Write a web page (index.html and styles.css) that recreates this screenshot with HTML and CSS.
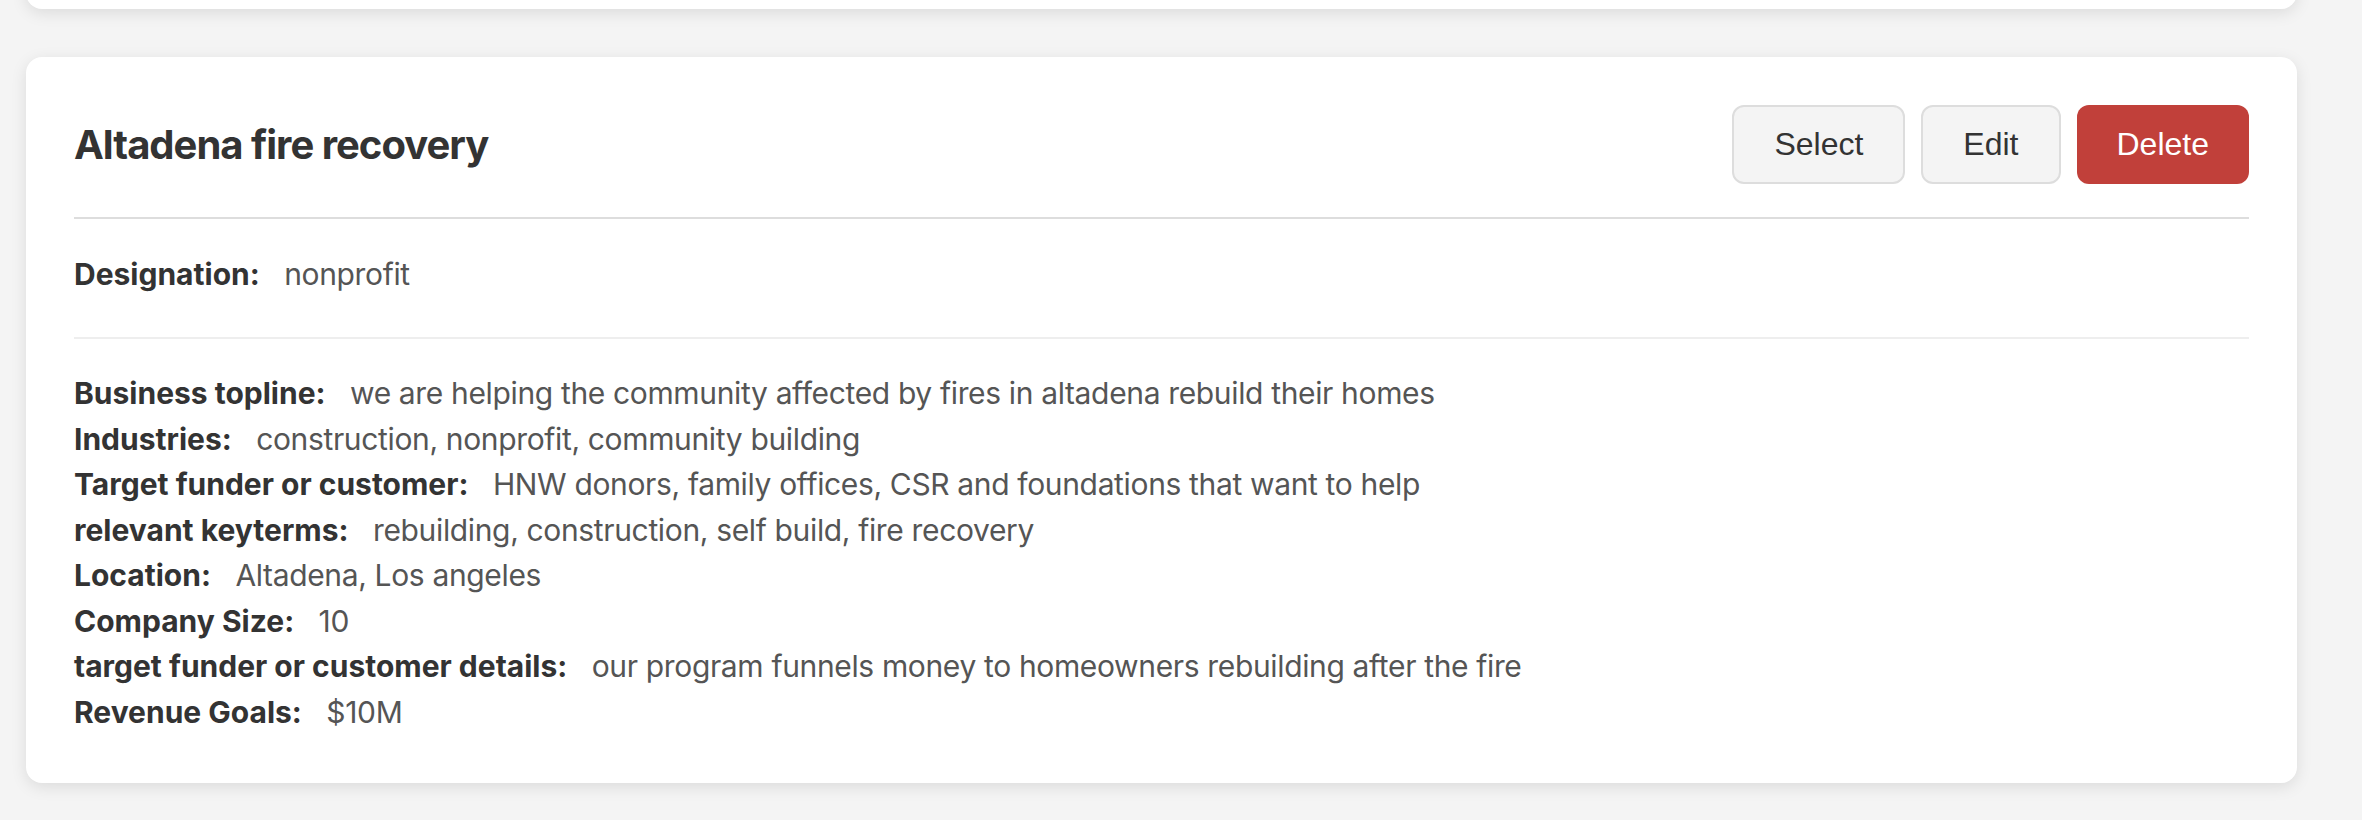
FILE: index.html
```html
<!DOCTYPE html>
<html lang="en">
<head>
    <meta charset="UTF-8">
    <meta name="viewport" content="width=device-width, initial-scale=1.0">
    <title>Business Profiles</title>
    <link rel="stylesheet" href="styles.css">
</head>
<body>
    <div class="profile-list">
        <!-- previous profile, scrolled off the top -->
        <div class="profile-card profile-card-prev"></div>

        <div class="profile-card">
            <div class="profile-header">
                <h2 class="profile-title">Altadena fire recovery</h2>
                <div class="profile-actions">
                    <button class="btn">Select</button>
                    <button class="btn">Edit</button>
                    <button class="btn btn-delete">Delete</button>
                </div>
            </div>

            <div class="profile-designation">
                <span class="field-label">Designation:</span> <span class="field-value">nonprofit</span>
            </div>

            <div class="profile-details">
                <div class="field-row"><span class="field-label">Business topline:</span> <span class="field-value">we are helping the community affected by fires in altadena rebuild their homes</span></div>
                <div class="field-row"><span class="field-label">Industries:</span> <span class="field-value">construction, nonprofit, community building</span></div>
                <div class="field-row"><span class="field-label">Target funder or customer:</span> <span class="field-value">HNW donors, family offices, CSR and foundations that want to help</span></div>
                <div class="field-row"><span class="field-label">relevant keyterms:</span> <span class="field-value">rebuilding, construction, self build, fire recovery</span></div>
                <div class="field-row"><span class="field-label">Location:</span> <span class="field-value">Altadena, Los angeles</span></div>
                <div class="field-row"><span class="field-label">Company Size:</span> <span class="field-value">10</span></div>
                <div class="field-row"><span class="field-label">target funder or customer details:</span> <span class="field-value">our program funnels money to homeowners rebuilding after the fire</span></div>
                <div class="field-row"><span class="field-label">Revenue Goals:</span> <span class="field-value">$10M</span></div>
            </div>
        </div>
    </div>
</body>
</html>
```

FILE: styles.css
```css
body {
    margin: 0;
    background-color: #f4f4f4;
    font-family: Inter, "Noto Sans", sans-serif;
    color: #333;
}

.profile-list {
    width: 2271px;
    margin-left: 26px;
}

.profile-card {
    background-color: #fff;
    border-radius: 16px;
    box-shadow: 0 4px 16px rgba(0, 0, 0, 0.1);
    padding: 48px;
    margin-bottom: 48px;
}

.profile-card-prev {
    height: 49px;
    margin-top: -40px;
    padding: 0;
}

.profile-header {
    display: flex;
    justify-content: space-between;
    align-items: center;
    padding-bottom: 33px;
    border-bottom: 2px solid #ddd;
}

.profile-title {
    margin: 0;
    font-size: 40px;
    font-weight: 700;
    letter-spacing: -1px;
    color: #333;
}

.profile-actions {
    display: flex;
    gap: 16px;
}

.btn {
    font-family: "Liberation Sans", Arial, sans-serif;
    font-size: 32px;
    color: #333;
    background-color: #f4f4f4;
    border: 2px solid #ddd;
    border-radius: 12px;
    padding: 19px 40px;
    cursor: pointer;
}

.btn-delete {
    background-color: #c1403a;
    border: none;
    padding: 21px 40px;
    color: #fff;
}

.profile-designation {
    padding: 32px 0 40px;
    border-bottom: 2px solid #eee;
    font-size: 30px;
    line-height: 46px;
}

.profile-details {
    padding-top: 32px;
    font-size: 30px;
    line-height: 45.5px;
}

.field-label {
    font-weight: 700;
    color: #333;
    margin-right: 16px;
}

.field-value {
    letter-spacing: -0.35px;
    color: #555;
}
```
